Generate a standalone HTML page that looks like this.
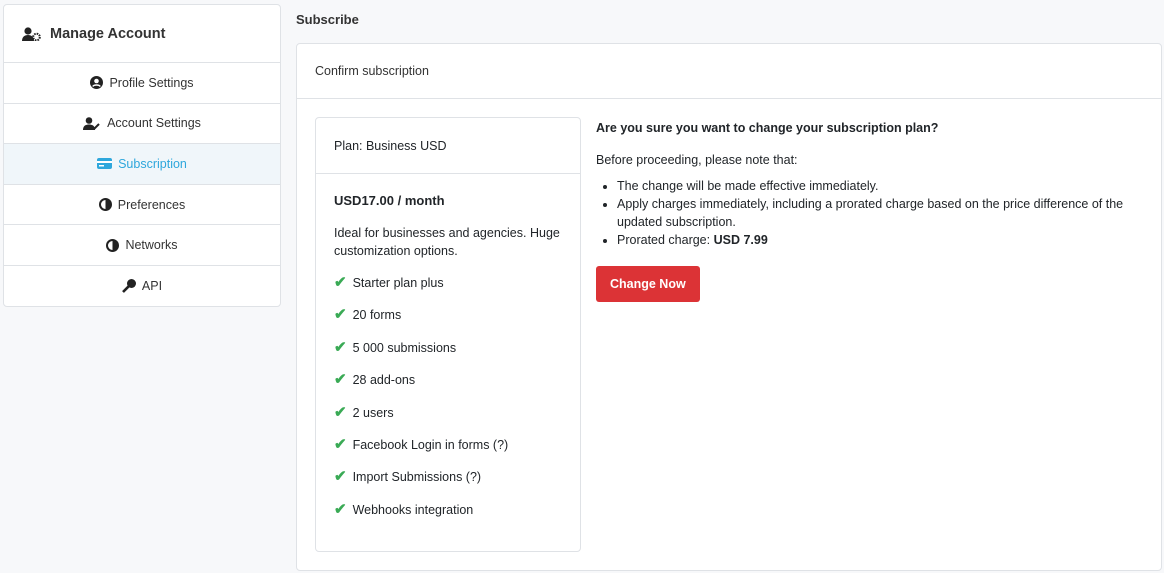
<!DOCTYPE html>
<html><head><style>
body{margin:0;background:#f7f8fa;font-family:"Liberation Sans",sans-serif;font-size:12.5px;color:#212529;width:1164px;height:573px;overflow:hidden;position:relative}
.side{position:absolute;left:3px;top:4px;width:276px;border:1px solid #dfe2e6;border-radius:4px;background:#fff}
.side .hd{height:57px;border-bottom:1px solid #dfe2e6;display:flex;align-items:center;padding-left:18px;font-size:14.5px;font-weight:bold;color:#333}
.side .it{height:39.6px;border-bottom:1px solid #dfe2e6;display:flex;align-items:center;justify-content:center;gap:6px;color:#333}
.side .it:last-child{border-bottom:none}
.side .act{background:#f0f6fa;color:#2ea7dc}
.ttl{position:absolute;left:296px;top:12px;font-weight:bold;font-size:13px;color:#333}
.card{position:absolute;left:296px;top:43px;width:864px;height:526px;border:1px solid #dfe2e6;border-radius:4px;background:#fff}
.card .ch{height:54px;border-bottom:1px solid #dfe2e6;display:flex;align-items:center;padding-left:18px;color:#333}
.plan{position:absolute;left:18px;top:73px;width:264px;height:433px;border:1px solid #dfe2e6;border-radius:4px}
.plan .ph{height:55px;border-bottom:1px solid #dfe2e6;display:flex;align-items:center;padding-left:18px}
.plan .pb{padding:19px 18px}
.li{height:32.4px;display:flex;align-items:flex-start;gap:6px}
.ck{color:#3aaa55;font-weight:bold;font-size:15px;line-height:14px}
.right{position:absolute;left:299px;top:75px;width:550px;line-height:18px}
ul{margin:8px 0 0;padding-left:21px}
.btn{display:inline-block;background:#dc3336;color:#fff;font-weight:bold;padding:0 14px;height:36px;line-height:36px;border-radius:3px;margin-top:17px}
</style></head><body>
<div class="side">
<div class="hd"><svg width="20" height="14" viewBox="0 0 20 14" style="margin-right:8px"><circle cx="6" cy="4" r="3.6" fill="#222"/><path d="M0 14c0-4 2.5-6 6-6s6 2 6 6z" fill="#222"/><circle cx="14.5" cy="10" r="3.3" fill="none" stroke="#222" stroke-width="2" stroke-dasharray="1.6 1"/></svg>Manage Account</div>
<div class="it"><svg width="13" height="13"><circle cx="6.5" cy="6.5" r="6.5" fill="#222"/><circle cx="6.5" cy="5" r="2.3" fill="#fff"/><path d="M2.8 10.5c1-2 6.4-2 7.4 0" stroke="#fff" stroke-width="1.5" fill="none"/></svg>Profile Settings</div>
<div class="it"><svg width="18" height="13"><circle cx="6" cy="3.5" r="3.3" fill="#222"/><path d="M0 13c0-4 2.5-5.5 6-5.5s6 1.5 6 5.5z" fill="#222"/><path d="M11 12l5-5" stroke="#222" stroke-width="2"/></svg>Account Settings</div>
<div class="it act"><svg width="15" height="11"><rect width="15" height="11" rx="2" fill="#2ea7dc"/><rect y="3" width="15" height="2" fill="#fff"/><rect x="2" y="7" width="5" height="1.5" fill="#fff"/></svg>Subscription</div>
<div class="it"><svg width="13" height="13"><circle cx="6.5" cy="6.5" r="5.5" fill="#fff" stroke="#222" stroke-width="2"/><path d="M6.5 1a5.5 5.5 0 0 1 0 11z" fill="#222"/></svg>Preferences</div>
<div class="it"><svg width="13" height="13"><circle cx="6.5" cy="6.5" r="5.5" fill="#fff" stroke="#222" stroke-width="2"/><path d="M6.5 1a5.5 5.5 0 0 1 0 11z" fill="#222"/></svg>Networks</div>
<div class="it"><svg width="14" height="14"><circle cx="9.5" cy="4.5" r="4.5" fill="#222"/><path d="M7 7l-6 6" stroke="#222" stroke-width="2.6"/></svg>API</div>
</div>
<div class="ttl">Subscribe</div>
<div class="card">
<div class="ch">Confirm subscription</div>
<div class="plan">
<div class="ph">Plan: Business USD</div>
<div class="pb">
<div style="font-weight:bold;font-size:13px">USD17.00 / month</div>
<div style="margin-top:16px;line-height:18px">Ideal for businesses and agencies. Huge customization options.</div>
<div style="margin-top:16px">
<div class="li"><span class="ck">✔</span>Starter plan plus</div>
<div class="li"><span class="ck">✔</span>20 forms</div>
<div class="li"><span class="ck">✔</span>5 000 submissions</div>
<div class="li"><span class="ck">✔</span>28 add-ons</div>
<div class="li"><span class="ck">✔</span>2 users</div>
<div class="li"><span class="ck">✔</span>Facebook Login in forms (?)</div>
<div class="li"><span class="ck">✔</span>Import Submissions (?)</div>
<div class="li"><span class="ck">✔</span>Webhooks integration</div>
</div></div></div>
<div class="right">
<div style="font-weight:bold">Are you sure you want to change your subscription plan?</div>
<div style="margin-top:14px">Before proceeding, please note that:</div>
<ul><li>The change will be made effective immediately.</li>
<li>Apply charges immediately, including a prorated charge based on the price difference of the updated subscription.</li>
<li>Prorated charge: <b>USD 7.99</b></li></ul>
<div class="btn">Change Now</div>
</div>
</div>
</body></html>
